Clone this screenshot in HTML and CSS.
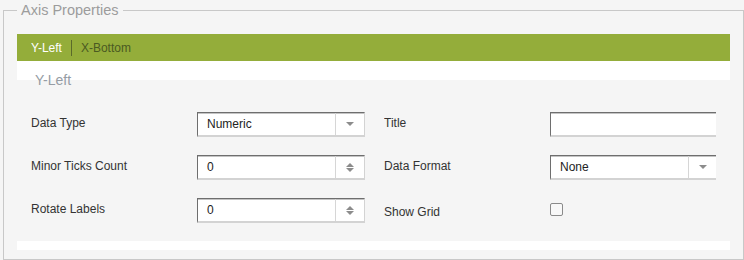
FILE: index.html
```html
<!DOCTYPE html>
<html lang="en">
<head>
<meta charset="utf-8">
<title>Axis Properties</title>
<link rel="stylesheet" href="styles.css">
</head>
<body>
<fieldset class="axis">
  <legend class="axis-legend">Axis Properties</legend>
  <div class="tabs">
    <span class="tab tab-active">Y-Left</span>
    <span class="tab">X-Bottom</span>
  </div>
  <div class="panel">
    <fieldset class="group">
      <legend class="group-legend">Y-Left</legend>
      <div class="grid">
        <div class="field">
          <span class="label">Data Type</span>
          <div class="control">
            <span class="value">Numeric</span>
            <span class="btn"><svg width="8" height="4" viewBox="0 0 8 4"><path d="M0 0H8L4 4Z" fill="#8c8c8c"/></svg></span>
          </div>
        </div>
        <div class="field">
          <span class="label">Title</span>
          <div class="control"><span class="value"></span></div>
        </div>
        <div class="field">
          <span class="label">Minor Ticks Count</span>
          <div class="control">
            <span class="value">0</span>
            <span class="btn"><svg width="8" height="9" viewBox="0 0 8 9"><path d="M4 0L8 4H0Z M0 5H8L4 9Z" fill="#8c8c8c"/></svg></span>
          </div>
        </div>
        <div class="field">
          <span class="label">Data Format</span>
          <div class="control">
            <span class="value">None</span>
            <span class="btn"><svg width="8" height="4" viewBox="0 0 8 4"><path d="M0 0H8L4 4Z" fill="#8c8c8c"/></svg></span>
          </div>
        </div>
        <div class="field">
          <span class="label">Rotate Labels</span>
          <div class="control">
            <span class="value">0</span>
            <span class="btn"><svg width="8" height="9" viewBox="0 0 8 9"><path d="M4 0L8 4H0Z M0 5H8L4 9Z" fill="#8c8c8c"/></svg></span>
          </div>
        </div>
        <div class="field">
          <span class="label label-low">Show Grid</span>
          <span class="check"></span>
        </div>
      </div>
    </fieldset>
  </div>
</fieldset>
</body>
</html>
```

FILE: styles.css
```css
html, body {
  margin: 0;
  padding: 0;
  background: #f5f5f5;
}

body {
  font-family: "Liberation Sans", Arial, sans-serif;
  font-size: 12px;
  color: #333;
  width: 744px;
  height: 260px;
  overflow: hidden;
}

.axis {
  margin: 0 0 0 3px;
  border: 1px solid #c8c8c8;
  padding: 14px 13px 9px 13px;
  min-width: 0;
}

.axis-legend {
  font-size: 14.5px;
  line-height: 20px;
  padding: 0 4px;
  color: #9c9c9c;
}

.tabs {
  display: flex;
  align-items: center;
  height: 27px;
  background: #94ad3a;
  padding-left: 5px;
}

.tab {
  padding: 0 9px;
  line-height: 16px;
  font-size: 12px;
  color: #4b5a22;
}

.tab-active {
  color: #fff;
  border-right: 1px solid #5a6a2a;
}

.panel {
  background: #fff;
  padding: 10px 0 9px 0;
}

.group {
  margin: 0;
  border: 0;
  padding: 23px 14px 18px 14px;
  background: #f5f5f5;
  min-width: 0;
}

.group-legend {
  font-size: 14px;
  line-height: 18px;
  padding: 0 4px;
  color: #959ca4;
}

.grid {
  display: grid;
  grid-template-columns: 334px 332px;
  grid-auto-rows: 25px;
  column-gap: 19px;
  row-gap: 18px;
}

.field {
  display: flex;
  align-items: center;
  overflow: hidden;
}

.label {
  flex: none;
  width: 166px;
  line-height: 14px;
  padding-bottom: 3px;
}

.label-low {
  padding-bottom: 0;
  padding-top: 3px;
}

.control {
  flex: none;
  display: flex;
  box-sizing: border-box;
  width: 168px;
  height: 25px;
  background: #fff;
  border-style: solid;
  border-width: 1px 1px 2px 1px;
  border-color: #6e6e6e #d3d3d3 #d3d3d3 #6e6e6e;
  box-shadow: inset 0 1px 0 #c4c4c4;
}

.value {
  flex: 1;
  padding-left: 9px;
  line-height: 22px;
  color: #222;
}

.btn {
  flex: none;
  width: 28px;
  display: flex;
  align-items: center;
  justify-content: center;
  border-left: 1px solid #d6d6d6;
}

.check {
  flex: none;
  box-sizing: border-box;
  width: 13px;
  height: 13px;
  border: 1px solid #8a8a8a;
  border-radius: 2px;
  background: #f8f8f8;
  margin-bottom: 2px;
}
```
